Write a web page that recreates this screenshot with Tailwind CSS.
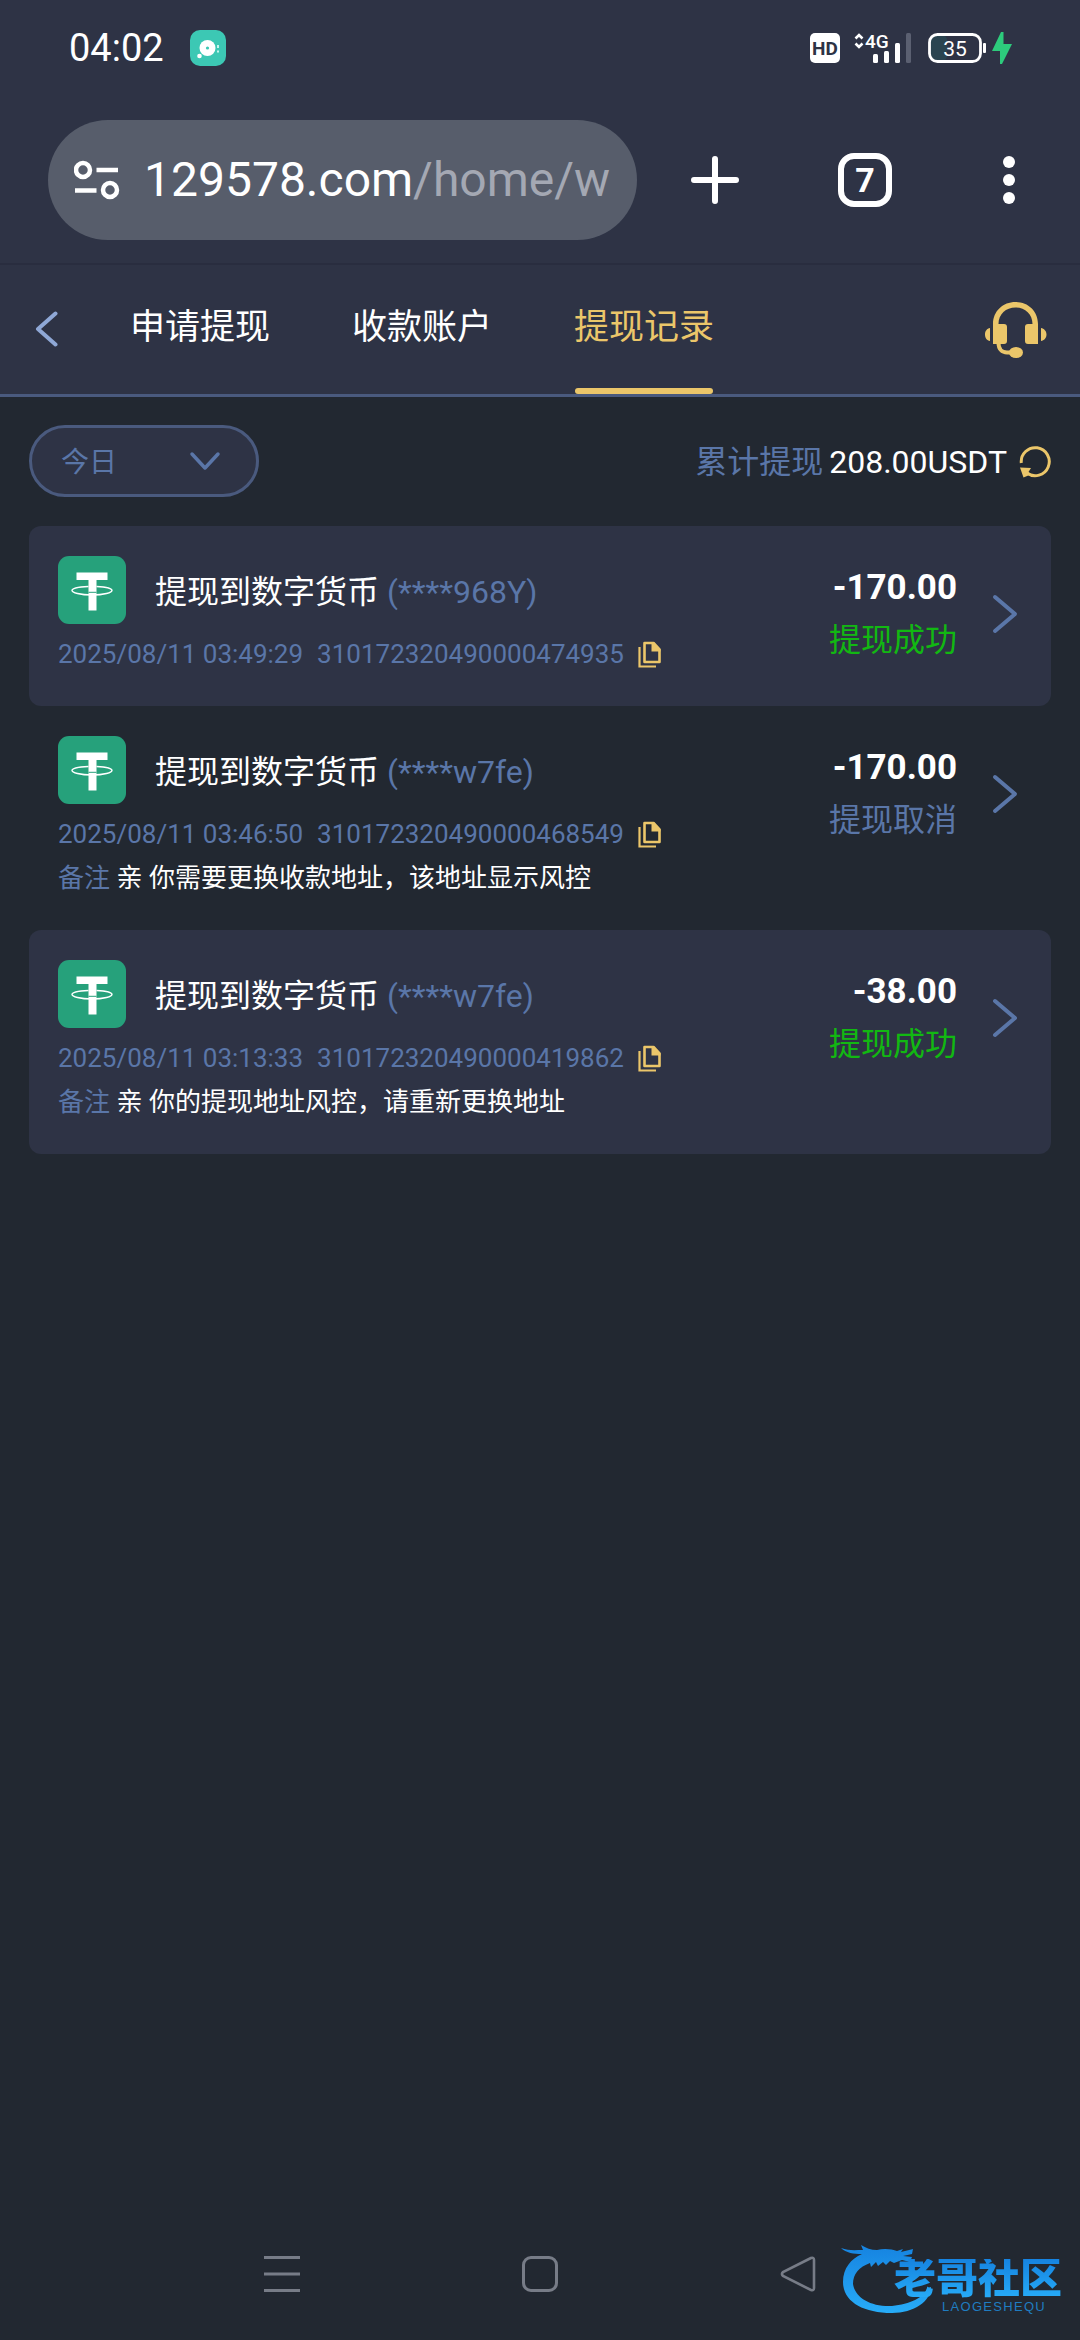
<!DOCTYPE html>
<html lang="zh-CN">
<head>
<meta charset="utf-8">
<meta name="viewport" content="width=device-width, initial-scale=1">
<title>提现记录</title>
<script src="https://cdn.jsdelivr.net/npm/@tailwindcss/browser@4"></script>
</head>
<body class="flex min-h-screen flex-col bg-[#222831] font-['Roboto','Noto_Sans_CJK_SC',sans-serif] text-white">

<!-- Shared symbols -->
<svg class="hidden" aria-hidden="true">
  <symbol id="tether" viewBox="0 0 68 68">
    <rect width="68" height="68" rx="11" fill="#26a17b"/>
    <path d="M18.500 16.500h31v7.500H38.500V54.500h-8V24H18.500z" fill="#fff"/>
    <path d="M30.500 30.500C20 31 14 32.500 14 34.500s8 4.500 20 4.500 20-2.500 20-4.500-6-3.500-15.500-4" fill="none" stroke="#fff" stroke-width="1.400"/>
    <path d="M30.500 36.300h8" stroke="#26a17b" stroke-width="1"/>
  </symbol>
  <symbol id="copy" viewBox="0 0 24 28">
    <path d="M1.500 6v19.500H18" fill="none" stroke="#ebc66a" stroke-width="2.200"/>
    <path d="M6.500 2h9l6 6.500V21h-15z" fill="none" stroke="#ebc66a" stroke-width="2.600" stroke-linejoin="round"/>
    <path d="M13.500 1.500h2.500l6.500 7v2h-9z" fill="#ebc66a"/>
  </symbol>
  <symbol id="next" viewBox="0 0 26 40">
    <path d="M3 3l20 17L3 37" fill="none" stroke="#5a76a8" stroke-width="4" stroke-linecap="round" stroke-linejoin="round"/>
  </symbol>
</svg>

<!-- Status bar -->
<div class="flex h-24 items-center justify-between bg-[#2e3345] pr-[68px] pl-[69px]">
  <div class="flex items-center gap-[26px]">
    <span class="text-[38px] leading-10">04:02</span>
    <svg class="size-9" viewBox="0 0 36 36" aria-hidden="true">
      <rect width="36" height="36" rx="10" fill="#3cc8b4"/>
      <circle cx="17.500" cy="18" r="8" fill="#fff"/><circle cx="17.500" cy="18" r="1.600" fill="#3cc8b4"/>
      <circle cx="9.500" cy="26" r="2.300" fill="#fff"/>
      <path d="M28 15v3M28 20.500v2" stroke="#c8f5ee" stroke-width="2"/>
    </svg>
  </div>
  <div class="flex items-center">
    <svg class="mr-[14px] h-[30px] w-[30px]" viewBox="0 0 30 30"><rect width="30" height="30" rx="5" fill="#fff"/><text x="15" y="22" text-anchor="middle" font-size="19" font-weight="700" fill="#2e3345">HD</text></svg>
    <svg class="mr-[17px] h-[30px] w-[57px] overflow-visible" viewBox="0 0 57 30">
      <path d="M1.500 5.500L5 2l3.500 3.500M1.500 10.500L5 14l3.500-3.500" fill="none" stroke="#fff" stroke-width="2.600"/>
      <text x="11" y="15" font-size="19" font-weight="500" fill="#fff">4G</text>
      <rect x="19" y="21" width="5" height="9" rx="1.500" fill="#fff"/><rect x="30" y="18" width="5" height="12" rx="1.500" fill="#fff"/><rect x="41" y="10" width="5" height="20" rx="1.500" fill="#fff"/><rect x="52" y="0" width="5" height="30" rx="1.500" fill="#5b6071"/>
    </svg>
    <svg class="h-[32px] w-[84px]" viewBox="0 0 84 32">
      <rect x="3" y="3" width="16" height="26" rx="5" fill="#2a4450"/>
      <rect x="1.500" y="2.500" width="51" height="27" rx="8" fill="none" stroke="#fff" stroke-width="2.800"/>
      <rect x="55" y="11" width="3" height="10" rx="1" fill="#fff"/>
      <text x="27" y="23.500" text-anchor="middle" font-size="21" fill="#fff">35</text>
      <path d="M73 0L64 19h8v13h2l10-20h-8.500V0z" fill="#2dcb7c"/>
    </svg>
  </div>
</div>

<!-- Browser toolbar -->
<div class="flex h-[169px] items-start border-b-2 border-[#292d3f] bg-[#2e3345] pt-6 pr-[59px] pl-12">
  <button type="button" class="flex h-[120px] min-w-0 flex-1 items-center gap-6 rounded-full bg-[#575d6b] pl-[26px] text-left">
    <svg class="h-10 w-[46px] shrink-0" viewBox="0 0 46 40" fill="none" stroke="#fff" stroke-width="4.500" aria-hidden="true">
      <circle cx="9" cy="10" r="7"/><path d="M22.500 10H44M1 30.500h21.500"/><circle cx="36" cy="30" r="7"/>
    </svg>
    <span class="truncate text-5xl leading-[60px] whitespace-nowrap">129578.com<span class="text-[#a4a8b3]">/home/w</span></span>
  </button>
  <div class="flex h-[120px] items-center pl-[54px]">
    <button type="button" aria-label="新标签页"><svg class="size-12" viewBox="0 0 48 48"><path d="M24 3v42M3 24h42" stroke="#fff" stroke-width="6" stroke-linecap="round"/></svg></button>
    <button type="button" class="ml-[99px] flex size-[54px] items-center justify-center rounded-2xl border-[6px] border-white text-[34px] leading-none font-bold">7</button>
    <button type="button" class="ml-[105px]" aria-label="更多"><svg class="h-12 w-6" viewBox="0 0 24 48" fill="#fff"><circle cx="12" cy="6" r="6"/><circle cx="12" cy="24" r="6"/><circle cx="12" cy="42" r="6"/></svg></button>
  </div>
</div>

<!-- Page header -->
<header class="flex h-[132px] items-stretch border-b-[3px] border-[#4a5a7e] bg-[#2e3345] pr-[33px] pl-[34px]">
  <button type="button" aria-label="返回"><svg class="h-[38px] w-[25px]" viewBox="0 0 25 38"><path d="M21.500 2.500L4 18l17.500 15.500" fill="none" stroke="#8fa8d6" stroke-width="4" stroke-linecap="round" stroke-linejoin="round"/></svg></button>
  <nav class="ml-[71px] flex gap-[82px] text-[35px]">
    <a href="#" class="flex items-center border-b-[3px] border-transparent whitespace-nowrap">申请提现</a>
    <a href="#" class="flex items-center border-b-[3px] border-transparent whitespace-nowrap">收款账户</a>
    <a href="#" aria-current="page" class="relative flex items-center border-b-[3px] border-transparent whitespace-nowrap text-[#ebc66a]">提现记录<span class="absolute inset-x-px -bottom-[3px] h-[6px] rounded-full bg-[#ebc66a]"></span></a>
  </nav>
  <button type="button" class="ml-auto" aria-label="客服">
    <svg class="h-14 w-[62px]" viewBox="0 0 62 56" fill="#ebc66a">
      <path d="M8 42V22C8 9 18 0 30.500 0S53 9 53 22v20H43a3 3 0 0 1-3-3V25a3 3 0 0 1 3-3h4.500C47.500 12 40 5.500 30.500 5.500S13.500 12 13.500 22H19a3 3 0 0 1 3 3v14a3 3 0 0 1-3 3z"/>
      <path d="M5 26v13C2 38.500 0 36 0 32.500S2 26.500 5 26zM56 26v13c3-.5 5.500-3 5.500-6.500S59 26.500 56 26z"/>
      <path d="M13.500 41c0 6 3.500 9.500 8.500 9.500h5" fill="none" stroke="#ebc66a" stroke-width="4"/>
      <ellipse cx="31" cy="50.500" rx="7" ry="5.500"/>
    </svg>
  </button>
</header>

<main class="flex-1 px-[29px]">
  <div class="mt-7 mb-[29px] flex h-[72px] items-center justify-between">
    <div class="relative h-full w-[230px]">
      <select aria-label="日期" class="h-full w-full appearance-none rounded-full border-[3px] border-[#4a5a7e] bg-[#2e3345] pt-[3px] pl-[29px] text-[28px] text-[#5a76a8]"><option>今日</option></select>
      <svg class="pointer-events-none absolute top-[26px] right-[38px] h-5 w-8" viewBox="0 0 32 20"><path d="M3 3l13 14L29 3" fill="none" stroke="#5a76a8" stroke-width="3.500" stroke-linecap="round" stroke-linejoin="round"/></svg>
    </div>
    <div class="flex items-center pt-0.5 text-[32px] leading-10">
      <span class="text-[#5a76a8]">累计提现</span><span class="ml-1.5">208.00USDT</span>
      <button type="button" class="ml-3" aria-label="刷新"><svg class="size-8" viewBox="0 0 32 32"><path d="M2.300 17A14 14 0 1 1 8 27" fill="none" stroke="#ebc66a" stroke-width="3"/><path d="M1 21.500l11 .5-2.500 4 1 3-6 2.500z" fill="#ebc66a"/></svg></button>
    </div>
  </div>

  <ul>
    <li class="flex items-start rounded-xl bg-[#2e3345] py-[30px] pr-[33px] pl-[29px]">
      <div class="min-w-0 flex-1 whitespace-nowrap">
        <div class="flex items-center"><svg class="size-[68px]"><use href="#tether"/></svg><span class="ml-[29px] pt-[3px] text-[32px] leading-10">提现到数字货币 <span class="text-[#5a76a8]">(****968Y)</span></span></div>
        <div class="mt-2 flex h-11 items-center text-[26px] text-[#5a76a8]"><time>2025/08/11 03:49:29</time><span class="ml-[14px]">310172320490000474935</span><button type="button" class="ml-[14px] pt-0.5" aria-label="复制"><svg class="h-7 w-6"><use href="#copy"/></svg></button></div>
      </div>
      <div class="text-right whitespace-nowrap"><div class="mt-1.5 text-[35px] leading-[52px] font-bold">-170.00</div><div class="text-[32px] leading-[52px] text-[#12b812]">提现成功</div></div>
      <a href="#" class="ml-[35px] flex h-[116px] items-center" aria-label="详情"><svg class="h-10 w-[26px]"><use href="#next"/></svg></a>
    </li>
    <li class="flex items-start rounded-xl py-[30px] pr-[33px] pl-[29px]">
      <div class="min-w-0 flex-1 whitespace-nowrap">
        <div class="flex items-center"><svg class="size-[68px]"><use href="#tether"/></svg><span class="ml-[29px] pt-[3px] text-[32px] leading-10">提现到数字货币 <span class="text-[#5a76a8]">(****w7fe)</span></span></div>
        <div class="mt-2 flex h-11 items-center text-[26px] text-[#5a76a8]"><time>2025/08/11 03:46:50</time><span class="ml-[14px]">310172320490000468549</span><button type="button" class="ml-[14px] pt-0.5" aria-label="复制"><svg class="h-7 w-6"><use href="#copy"/></svg></button></div>
        <p class="pt-px text-[26px] leading-[43px]"><span class="text-[#5a76a8]">备注</span> 亲 你需要更换收款地址，该地址显示风控</p>
      </div>
      <div class="text-right whitespace-nowrap"><div class="mt-1.5 text-[35px] leading-[52px] font-bold">-170.00</div><div class="text-[32px] leading-[52px] text-[#5a76a8]">提现取消</div></div>
      <a href="#" class="ml-[35px] flex h-[116px] items-center" aria-label="详情"><svg class="h-10 w-[26px]"><use href="#next"/></svg></a>
    </li>
    <li class="flex items-start rounded-xl bg-[#2e3345] py-[30px] pr-[33px] pl-[29px]">
      <div class="min-w-0 flex-1 whitespace-nowrap">
        <div class="flex items-center"><svg class="size-[68px]"><use href="#tether"/></svg><span class="ml-[29px] pt-[3px] text-[32px] leading-10">提现到数字货币 <span class="text-[#5a76a8]">(****w7fe)</span></span></div>
        <div class="mt-2 flex h-11 items-center text-[26px] text-[#5a76a8]"><time>2025/08/11 03:13:33</time><span class="ml-[14px]">310172320490000419862</span><button type="button" class="ml-[14px] pt-0.5" aria-label="复制"><svg class="h-7 w-6"><use href="#copy"/></svg></button></div>
        <p class="pt-px text-[26px] leading-[43px]"><span class="text-[#5a76a8]">备注</span> 亲 你的提现地址风控，请重新更换地址</p>
      </div>
      <div class="text-right whitespace-nowrap"><div class="mt-1.5 text-[35px] leading-[52px] font-bold">-38.00</div><div class="text-[32px] leading-[52px] text-[#12b812]">提现成功</div></div>
      <a href="#" class="ml-[35px] flex h-[116px] items-center" aria-label="详情"><svg class="h-10 w-[26px]"><use href="#next"/></svg></a>
    </li>
  </ul>
</main>

<!-- System navigation -->
<footer class="relative flex h-[132px] items-center justify-between px-[264px]">
  <button type="button" aria-label="最近任务"><svg class="size-9" viewBox="0 0 36 36"><path d="M0 1.500h36M0 18h36M0 34.500h36" stroke="#777c87" stroke-width="3"/></svg></button>
  <button type="button" aria-label="主屏幕" class="size-9 rounded-[9px] border-[3px] border-[#777c87]"></button>
  <button type="button" aria-label="返回"><svg class="size-9" viewBox="0 0 36 36"><path d="M31 2L3 16q-2 2 0 4l28 14q3 1 3-2V4q0-3-3-2z" fill="none" stroke="#777c87" stroke-width="2.600"/></svg></button>

  <div class="absolute right-[18px] bottom-[27px] h-[72px] w-[222px]">
    <svg class="absolute inset-0 size-full" viewBox="0 0 222 72" aria-hidden="true">
      <defs><linearGradient id="wave" x1="0" y1="0" x2="0" y2="1"><stop offset="0" stop-color="#1683e0"/><stop offset="1" stop-color="#27acf8"/></linearGradient></defs>
      <path d="M1 7C9 10 15 9 23 9L21 4C26 7 31 9 37 9C44 7 52 8 57 10L63 8L61 11L73 8L72 13L63 15L72 16L70 21L62 19L54 22L50 20L46 24L43 21L38 25L36 21L31 26L30 22C19 26 13 33 13 43C15 57 31 66 52 65C70 63 84 57 87 47L91 46C91 60 74 72 52 72C22 72 3 60 3 41C3 27 11 18 22 13C14 13 6 12 1 7Z" fill="url(#wave)"/>
    </svg>
    <span class="absolute right-0 bottom-3.5 bg-linear-to-b from-[#1683e0] to-[#27acf8] bg-clip-text text-[42px] leading-10 font-black text-transparent">老哥社区</span>
    <span class="absolute right-4 bottom-0 font-['Liberation_Sans',sans-serif] text-[13px] leading-3 tracking-widest text-[#1f7cc0]">LAOGESHEQU</span>
  </div>
</footer>
</body>
</html>
